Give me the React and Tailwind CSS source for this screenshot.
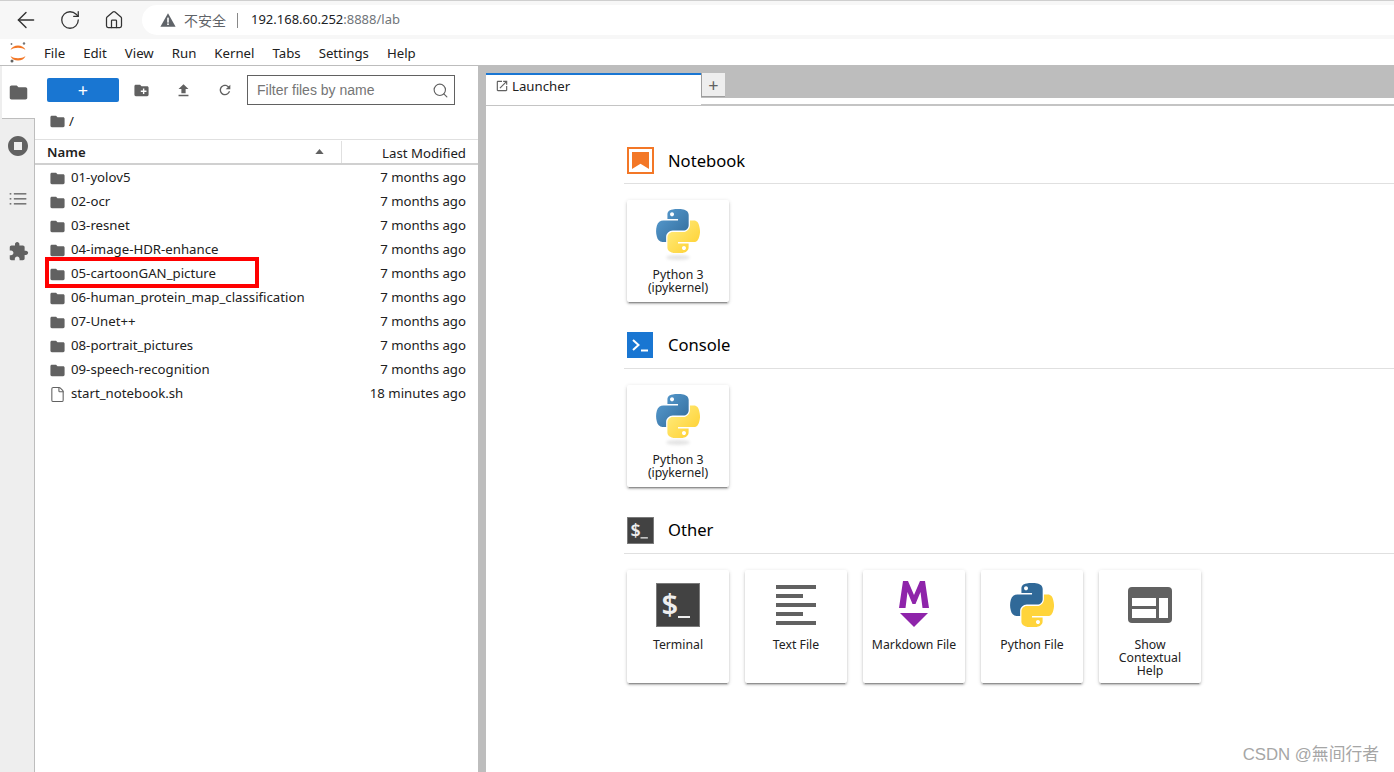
import React from 'react';
import { ArrowLeft, RotateCw, Home, Search, File } from 'lucide-react';

const FOLDER = 'M10 4H4c-1.1 0-1.99.9-1.99 2L2 18c0 1.1.9 2 2 2h16c1.1 0 2-.9 2-2V8c0-1.1-.9-2-2-2h-8l-2-2z';
const NEW_FOLDER = 'M20 6h-8l-2-2H4c-1.11 0-1.99.89-1.99 2L2 18c0 1.11.89 2 2 2h16c1.11 0 2-.89 2-2V8c0-1.11-.89-2-2-2zm-1 8h-3v3h-2v-3h-3v-2h3V9h2v3h3v2z';
const UPLOAD = 'M9 16h6v-6h4l-7-7-7 7h4v6zm-4 2h14v2H5z';
const REFRESH = 'M17.65 6.35C16.2 4.9 14.21 4 12 4c-4.42 0-7.99 3.58-7.99 8s3.57 8 7.99 8c3.73 0 6.84-2.55 7.73-6h-2.08c-.82 2.33-3.04 4-5.65 4-3.31 0-6-2.69-6-6s2.69-6 6-6c1.66 0 3.14.69 4.22 1.78L13 11h7V4l-2.35 2.35z';
const PUZZLE = 'M20.5 11H19V7c0-1.1-.9-2-2-2h-4V3.5C13 2.12 11.88 1 10.5 1S8 2.12 8 3.5V5H4c-1.1 0-1.99.9-1.99 2v3.8H3.5c1.49 0 2.7 1.21 2.7 2.7s-1.21 2.7-2.7 2.7H2V20c0 1.1.9 2 2 2h3.8v-1.5c0-1.49 1.21-2.7 2.7-2.7 1.49 0 2.7 1.21 2.7 2.7V22H17c1.1 0 2-.9 2-2v-4h1.5c1.38 0 2.5-1.12 2.5-2.5S21.88 11 20.5 11z';
const STOP = 'M12 2C6.48 2 2 6.48 2 12s4.48 10 10 10 10-4.48 10-10S17.52 2 12 2zm4 14H8V8h8v8z';
const LAUNCH = 'M19 19H5V5h7V3H5c-1.11 0-2 .9-2 2v14c0 1.1.89 2 2 2h14c1.1 0 2-.9 2-2v-7h-2v7zM14 3v2h3.59l-9.83 9.83 1.41 1.41L19 6.41V10h2V3h-7z';
const PY_BLUE = 'M54.9,0C50.3,0,46,0.4,42.1,1.1C30.7,3.1,28.6,7.4,28.6,15.2v10.4h27v3.5H28.6H18.5c-7.9,0-14.7,4.7-16.9,13.7c-2.5,10.3-2.6,16.7,0,27.4c1.9,8,6.5,13.7,14.4,13.7h9.3V71.6c0-8.9,7.7-16.8,16.9-16.8h27c7.5,0,13.5-6.2,13.5-13.7V15.2c0-7.3-6.2-12.8-13.5-14C64.8,0.4,59.5,0,54.9,0z M40.3,8.3c2.8,0,5.1,2.3,5.1,5.2c0,2.9-2.3,5.2-5.1,5.2c-2.8,0-5.1-2.3-5.1-5.2C35.2,10.6,37.5,8.3,40.3,8.3z';
const PY_YELLOW = 'M85.9,29.1v12.1c0,9.4-8,17.3-16.9,17.3h-27c-7.4,0-13.5,6.3-13.5,13.7v25.7c0,7.3,6.4,11.6,13.5,13.7c8.5,2.5,16.7,3,27,0c6.8-2,13.5-5.9,13.5-13.7V87.6h-27v-3.4h27h13.5c7.9,0,10.8-5.5,13.5-13.7c2.8-8.5,2.7-16.6,0-27.4c-1.9-7.8-5.6-13.7-13.5-13.7H85.9z M70.7,94.2c2.8,0,5.1,2.3,5.1,5.2c0,2.9-2.3,5.2-5.1,5.2c-2.8,0-5.1-2.3-5.1-5.2C65.6,96.5,67.9,94.2,70.7,94.2z';

const files = [
  ['01-yolov5', '7 months ago'],
  ['02-ocr', '7 months ago'],
  ['03-resnet', '7 months ago'],
  ['04-image-HDR-enhance', '7 months ago'],
  ['05-cartoonGAN_picture', '7 months ago'],
  ['06-human_protein_map_classification', '7 months ago'],
  ['07-Unet++', '7 months ago'],
  ['08-portrait_pictures', '7 months ago'],
  ['09-speech-recognition', '7 months ago'],
  ['start_notebook.sh', '18 minutes ago', true],
];

const menus = ['File', 'Edit', 'View', 'Run', 'Kernel', 'Tabs', 'Settings', 'Help'];

const Mat = ({ d, className }) => (
  <svg viewBox="0 0 24 24" className={className} fill="#616161">
    <path d={d} />
  </svg>
);

const PythonLogo = ({ id, flat }) => (
  <svg viewBox="0 0 111 112" className="w-[44px] h-[44px]">
    <defs>
      <linearGradient id={`${id}b`} x1="0" y1="0" x2="1" y2="1">
        <stop offset="0" stopColor="#5a9fd4" />
        <stop offset="1" stopColor="#306998" />
      </linearGradient>
      <linearGradient id={`${id}y`} x1="0.8" y1="0.8" x2="0.2" y2="0.2">
        <stop offset="0" stopColor="#ffd43b" />
        <stop offset="1" stopColor="#ffe873" />
      </linearGradient>
    </defs>
    <path d={PY_BLUE} fill={flat ? '#306998' : `url(#${id}b)`} />
    <path d={PY_YELLOW} fill={flat ? '#ffd43b' : `url(#${id}y)`} />
  </svg>
);

const KernelIcon = ({ id }) => (
  <div className="flex flex-col items-center">
    <PythonLogo id={id} />
    <div className="mt-[2px] w-[24px] h-[5px] rounded-[50%] bg-[#e4e4e4] blur-[1.5px]" />
  </div>
);

const JupyterLogo = () => (
  <svg viewBox="0 0 18 22" className="w-[18px] h-[22px]">
    <path d="M1.5 9C3.5 3 14.5 3 16.5 9 13 6 5 6 1.5 9z" fill="#f37726" />
    <path d="M1.5 15C3.5 21 14.5 21 16.5 15 13 18 5 18 1.5 15z" fill="#f37726" />
    <circle cx="15" cy="2.5" r="1.2" fill="#767677" />
    <circle cx="2.5" cy="3" r="0.9" fill="#767677" />
    <circle cx="3" cy="20" r="1.5" fill="#616262" />
  </svg>
);

const TerminalGlyph = ({ className }) => (
  <svg viewBox="0 0 44 44" className={className}>
    <rect x="0.5" y="0.5" width="43" height="43" fill="#424242" stroke="#7a7a7a" />
    <text x="5.5" y="32" fontSize="29" fontWeight="600" fill="#eeeeee" fontFamily="Noto Sans, sans-serif">$</text>
    <rect x="22" y="33" width="12" height="2" fill="#eeeeee" />
  </svg>
);

const Card = ({ icon, children, tall }) => (
  <div className={`w-[102px] ${tall ? 'h-[113px]' : 'h-[102px]'} bg-white rounded-[2px] flex flex-col items-center shadow-[0_3px_1px_-2px_rgba(0,0,0,0.25),0_2px_2px_0_rgba(0,0,0,0.18),0_1px_4px_0_rgba(0,0,0,0.14)]`}>
    <div className="h-[65px] pt-[9px] flex items-start justify-center">{icon}</div>
    <div className="text-center text-[12.25px] leading-[13px] text-[#212121] pt-[3px]">{children}</div>
  </div>
);

const Section = ({ icon, title, children }) => (
  <section className="mb-[30px]">
    <div className="h-[36px] flex items-start pl-[3px]">
      <div className="w-[27px] h-[27px] flex items-start justify-start">{icon}</div>
      <h2 className="ml-[14px] text-[16.6px] leading-[26px] text-black">{title}</h2>
    </div>
    <div className="h-[1px] bg-[#e0e0e0]" />
    <div className="mt-[16px] pl-[3px] flex gap-[16px]">{children}</div>
  </section>
);

export default function App() {
  return (
    <div className="w-[1394px] h-[772px] overflow-hidden relative bg-white font-['Noto_Sans','Noto_Sans_CJK_SC',sans-serif] text-[#212121]">
      {/* Browser chrome */}
      <header className="h-[39px] bg-[#f7f7f7] border-t border-[#cfcfcf] flex items-center">
        <div className="w-[142px] flex items-center pl-[4px] text-[#333]">
          <div className="w-[44px] flex justify-center"><ArrowLeft className="w-[26px] h-[26px]" strokeWidth={1.3} /></div>
          <div className="w-[44px] flex justify-center"><RotateCw className="w-[22px] h-[22px]" strokeWidth={1.4} /></div>
          <div className="w-[44px] flex justify-center"><Home className="w-[20px] h-[20px]" strokeWidth={1.5} /></div>
        </div>
        <div className="flex-1 h-[30px] bg-white rounded-l-[15px] flex items-center pl-[18px]">
          <svg viewBox="0 0 16 16" className="w-[16px] h-[16px]">
            <path d="M8 1.2 15.6 14.8H.4z" fill="#5f6368" />
            <rect x="7.2" y="5.6" width="1.6" height="5" fill="#fff" />
            <rect x="7.2" y="11.4" width="1.6" height="1.6" fill="#fff" />
          </svg>
          <span className="ml-[8px] text-[14px] text-[#5f6368] font-['Noto_Sans_CJK_SC',sans-serif]">不安全</span>
          <span className="ml-[11px] w-[1px] h-[15px] bg-[#888]" />
          <span className="ml-[13px] text-[13px] text-[#202124]">192.168.60.252<span className="text-[#70757a]">:8888/lab</span></span>
        </div>
      </header>

      {/* Menu bar */}
      <nav className="h-[27px] bg-white rounded-tl-[6px] border-b border-[#bdbdbd] flex items-center relative">
        <div className="w-[44px] pl-[9px] flex items-center"><JupyterLogo /></div>
        <div className="flex gap-[18px] text-[13.23px] pt-[4px] text-[#212121]">
          {menus.map((m) => <span key={m}>{m}</span>)}
        </div>
      </nav>

      <div className="flex h-[706px] text-[13.23px]">
        {/* Activity bar */}
        <aside className="w-[35px] bg-[#eeeeee] border-r border-[#bdbdbd] shrink-0 pl-[2px]">
          <div className="h-[53px] -mr-[1px] bg-white flex items-center justify-center pt-[1px] border-b border-[#bdbdbd] relative">
            <Mat d={FOLDER} className="w-[21px] h-[21px]" />
          </div>
          <div className="h-[53px] flex items-center justify-center">
            <Mat d={STOP} className="w-[24px] h-[24px]" />
          </div>
          <div className="h-[53px] flex items-center justify-center">
            <svg viewBox="0 0 24 24" className="w-[20px] h-[20px]" fill="#616161">
              <rect x="7" y="5" width="15" height="1.6" /><rect x="7" y="11" width="15" height="1.6" /><rect x="7" y="17" width="15" height="1.6" />
              <rect x="2" y="5" width="2" height="1.6" /><rect x="2" y="11" width="2" height="1.6" /><rect x="2" y="17" width="2" height="1.6" />
            </svg>
          </div>
          <div className="h-[53px] flex items-center justify-center">
            <Mat d={PUZZLE} className="w-[21px] h-[21px]" />
          </div>
        </aside>

        {/* File browser */}
        <div className="w-[443px] shrink-0 bg-white flex flex-col relative">
          <div className="h-[44px] flex items-start pl-[12px] pt-[12px]">
            <div className="w-[72px] h-[24px] rounded-[2px] bg-[#1976d2] flex items-center justify-center text-white text-[18px] leading-none">+</div>
            <div className="w-[44px] h-[24px] flex items-center justify-center"><Mat d={NEW_FOLDER} className="w-[17px] h-[17px]" /></div>
            <div className="w-[40px] h-[24px] flex items-center justify-center"><Mat d={UPLOAD} className="w-[17px] h-[17px]" /></div>
            <div className="w-[44px] h-[24px] flex items-center justify-center"><Mat d={REFRESH} className="w-[16px] h-[16px]" /></div>
            <div className="-mt-[3px] w-[208px] h-[30px] border border-[#616161] flex items-center pl-[9px] pr-[5px] justify-between font-['Liberation_Sans',sans-serif]">
              <span className="text-[14px] text-[#757575]">Filter files by name</span>
              <Search className="w-[17px] h-[17px] text-[#616161]" strokeWidth={1.6} />
            </div>
          </div>
          <div className="h-[29px] flex items-center pl-[14px] pb-[6px]">
            <Mat d={FOLDER} className="w-[17px] h-[17px]" />
            <span className="ml-[3px]">/</span>
          </div>
          <div className="h-[26px] border-t border-[#e0e0e0] border-b-2 border-b-[#d0d0d0] flex items-center">
            <div className="w-[306px] h-full pl-[12px] pr-[17px] flex items-center justify-between pt-[3px]">
              <span className="font-semibold">Name</span>
              <svg viewBox="0 0 10 6" className="w-[9px] h-[5px] -mt-[3px]"><path d="M5 0 10 6H0z" fill="#616161" /></svg>
            </div>
            <div className="flex-1 h-[22px] border-l border-[#e0e0e0] text-right pr-[12px] leading-[24px]">Last Modified</div>
          </div>
          <div className="relative pt-[1px]">
            {files.map(([name, when, isFile]) => (
              <div key={name} className="h-[24px] flex items-center pl-[14px] pr-[12px]">
                {isFile
                  ? <File className="w-[17px] h-[17px] text-[#616161]" strokeWidth={1.5} />
                  : <Mat d={FOLDER} className="w-[17px] h-[17px]" />}
                <span className="ml-[5px]">{name}</span>
                <span className="ml-auto">{when}</span>
              </div>
            ))}
            {/* Annotation drawn over the row */}
            <div className="absolute left-[10px] top-[92px] w-[214px] h-[31px] border-[4px] border-[#ff0000]" />
          </div>
        </div>

        {/* Splitter */}
        <div className="w-[8px] shrink-0 bg-[#bdbdbd]" />

        {/* Main area */}
        <main className="flex-1 min-w-0 flex flex-col">
          <div className="h-[40px] shrink-0 bg-white border-b-2 border-[#c4c4c4]">
            <div className="h-[32px] bg-[#bdbdbd] flex items-start pt-[7px]">
              <div className="w-[215px] h-[32px] bg-white border-t-2 border-[#1976d2] flex items-start pt-[1px] pl-[9px]">
                <Mat d={LAUNCH} className="w-[14px] h-[14px] mt-[3px]" />
                <span className="ml-[3px] leading-[20px]">Launcher</span>
              </div>
              <div className="w-[24px] h-[24px] bg-[#eeeeee] border-l border-b border-[#9e9e9e] flex items-center justify-center text-[#616161] text-[18px] leading-none">+</div>
            </div>
          </div>
          <div className="flex-1 pl-[138px] pt-[41px]">
            <Section
              title={<span className="relative top-[1px]">Notebook</span>}
              icon={
                <div className="w-[27px] h-[27px] border-2 border-[#f37726] flex items-center justify-center">
                  <svg viewBox="0 0 16 16" className="w-[17px] h-[17px]"><path d="M0 0H16V16L8 11 0 16z" fill="#f37726" /></svg>
                </div>
              }
            >
              <Card icon={<KernelIcon id="nb" />}>Python 3<br />(ipykernel)</Card>
            </Section>
            <Section
              title="Console"
              icon={
                <div className="w-[26px] h-[26px] bg-[#1976d2] flex items-center justify-center">
                  <svg viewBox="0 0 26 26" className="w-[26px] h-[26px]" fill="none" stroke="#fff" strokeWidth="2">
                    <path d="M6 8l5.5 5L6 18" /><path d="M14 18.5h7" />
                  </svg>
                </div>
              }
            >
              <Card icon={<KernelIcon id="co" />}>Python 3<br />(ipykernel)</Card>
            </Section>
            <Section title="Other" icon={<TerminalGlyph className="w-[27px] h-[27px]" />}>
              <Card tall icon={<TerminalGlyph className="w-[44px] h-[44px] mt-[4px]" />}>Terminal</Card>
              <Card tall icon={
                <svg viewBox="0 0 40 40" className="w-[40px] h-[40px] mt-[6px]" fill="#616161">
                  <rect y="0" width="40" height="4" /><rect y="9" width="27" height="4" /><rect y="18" width="40" height="4" /><rect y="27" width="27" height="4" /><rect y="36" width="40" height="4" />
                </svg>
              }>Text File</Card>
              <Card tall icon={
                <svg viewBox="0 0 30 46" className="w-[30px] h-[46px] mt-[2px]" fill="#8e24aa">
                  <path d="M0 27 4 0H9L15 14 21 0H26L30 27H23.5L21.5 11 16.5 23H13.5L8.5 11 6.5 27z" />
                  <path d="M1 32H29L15 46z" />
                </svg>
              }>Markdown File</Card>
              <Card tall icon={<div className="mt-[4px]"><PythonLogo id="pf" flat /></div>}>Python File</Card>
              <Card tall icon={
                <svg viewBox="0 0 44 36" className="w-[44px] h-[36px] mt-[8px]">
                  <rect width="44" height="36" rx="4" fill="#616161" />
                  <rect x="4" y="11" width="24" height="8" fill="#fff" />
                  <rect x="4" y="22" width="24" height="9" fill="#fff" />
                  <rect x="31" y="11" width="9" height="20" fill="#fff" />
                </svg>
              }>Show<br />Contextual<br />Help</Card>
            </Section>
          </div>
        </main>
      </div>

      {/* Watermark */}
      <div className="absolute right-[15px] top-[744px] text-[16.8px] leading-[22px] text-[#a6a6a6] font-['Liberation_Sans','Noto_Sans_CJK_TC',sans-serif]">CSDN @無间行者</div>
    </div>
  );
}
